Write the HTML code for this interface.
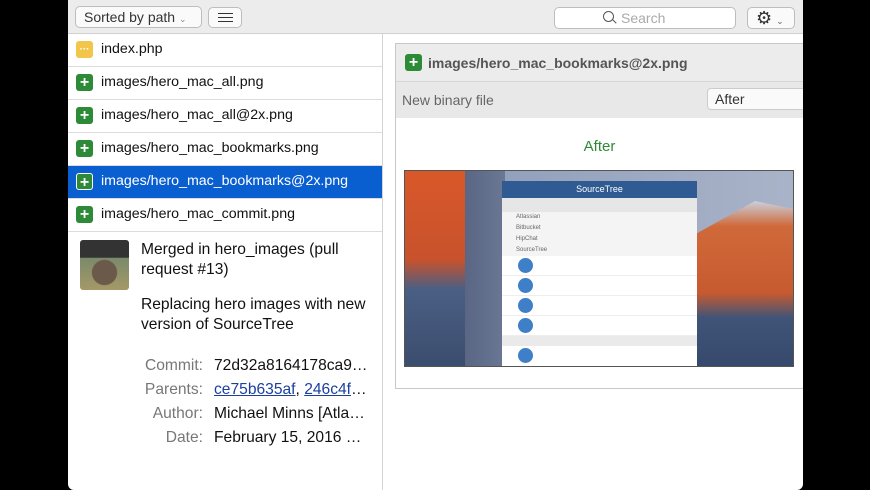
<!DOCTYPE html>
<html><head><style>
*{margin:0;padding:0;box-sizing:border-box}
body{width:870px;height:490px;background:#000;font-family:"Liberation Sans",sans-serif;position:relative;overflow:hidden}
.win{position:absolute;left:68px;top:0;width:735px;height:490px;background:#fff;border-radius:0 0 6px 6px;overflow:hidden}
.tb{position:absolute;left:0;top:0;width:735px;height:34px;background:#ececec;border-bottom:1px solid #d0d0d0}
.btn{position:absolute;background:#fafafa;border:1px solid #bdbdbd;border-radius:5px;font-size:14px;color:#333}
.left{position:absolute;left:0;top:34px;width:315px;height:456px;border-right:1px solid #d4d4d4}
.row{height:33px;border-bottom:1px solid #dcdcdc;font-size:14.2px;color:#111;line-height:30px;padding-left:33px;position:relative}
.ic{position:absolute;left:8px;top:7px;width:17px;height:17px;border-radius:3px;background:#2d8a36;color:#fff;font-weight:bold;font-size:16px;line-height:17px;text-align:center}
.sel{background:#0a5fd0;color:#fff}
.sel .ic{border:1px solid #fff}
.meta{position:absolute;font-size:15.6px;color:#111}
.lab{position:absolute;font-size:15.6px;color:#777;text-align:right;width:70px}
</style></head><body>
<div class="win">
 <div class="tb">
  <div class="btn" style="left:7px;top:6px;width:127px;height:22px;line-height:20px;padding-left:8px">Sorted by path <span style="font-size:9px;color:#888">&#8964;</span></div>
  <div class="btn" style="left:140px;top:7px;width:34px;height:21px"><div style="position:absolute;left:9px;top:5px;width:15px;height:9px;border-top:1.5px solid #333;border-bottom:1.5px solid #333"></div><div style="position:absolute;left:9px;top:9px;width:15px;border-top:1.5px solid #333"></div></div>
  <div class="btn" style="left:486px;top:7px;width:182px;height:22px;background:#fff;color:#aaa;line-height:20px;padding-left:66px"><span style="position:absolute;left:48px;top:3px;width:11px;height:11px;border:1.5px solid #555;border-radius:50%"></span><span style="position:absolute;left:57px;top:13px;width:5px;border-top:1.5px solid #555;transform:rotate(45deg)"></span>Search</div>
  <div class="btn" style="left:679px;top:7px;width:48px;height:22px;line-height:20px;padding-left:8px;font-size:18px">&#9881;<span style="font-size:9px;color:#666;margin-left:4px">&#8964;</span></div>
 </div>
 <div class="left">
  <div class="row"><span class="ic" style="background:#f2c54b;font-size:10px">&middot;&middot;&middot;</span>index.php</div>
  <div class="row"><span class="ic">+</span>images/hero_mac_all.png</div>
  <div class="row"><span class="ic">+</span>images/hero_mac_all@2x.png</div>
  <div class="row"><span class="ic">+</span>images/hero_mac_bookmarks.png</div>
  <div class="row sel"><span class="ic">+</span>images/hero_mac_bookmarks@2x.png</div>
  <div class="row"><span class="ic">+</span>images/hero_mac_commit.png</div>
  <div style="position:absolute;left:12px;top:206px;width:49px;height:50px;border-radius:3px;background:radial-gradient(circle at 50% 65%,#6b5a4a 0 30%,transparent 32%),linear-gradient(#333 0 35%,#7a8a6a 36%,#a59868 100%)"></div>
  <div class="meta" style="left:73px;top:206px;line-height:20px">Merged in hero_images (pull<br>request #13)</div>
  <div class="meta" style="left:73px;top:261px;line-height:20px">Replacing hero images with new<br>version of SourceTree</div>
  <div class="lab" style="left:65px;top:323px">Commit:</div><div class="meta" style="left:146px;top:323px">72d32a8164178ca9…</div>
  <div class="lab" style="left:65px;top:347px">Parents:</div><div class="meta" style="left:146px;top:347px;color:#1a3fa0"><u>ce75b635af</u><span style="color:#111">, </span><u>246c4f</u><span style="color:#111">…</span></div>
  <div class="lab" style="left:65px;top:371px">Author:</div><div class="meta" style="left:146px;top:371px">Michael Minns [Atla…</div>
  <div class="lab" style="left:65px;top:395px">Date:</div><div class="meta" style="left:146px;top:395px">February 15, 2016 …</div>
 </div>
 <div style="position:absolute;left:327px;top:43px;width:420px;height:346px;border:1px solid #c8c8c8;background:#fff">
  <div style="height:38px;background:#ececec;border-bottom:1px solid #d6d6d6;font-size:14px;font-weight:bold;color:#555;line-height:38px;padding-left:32px;position:relative"><span class="ic" style="left:9px;top:10px">+</span>images/hero_mac_bookmarks@2x.png</div>
  <div style="height:36px;background:#e8e8e8;font-size:14px;color:#666;line-height:36px;padding-left:6px;position:relative">New binary file
   <div style="position:absolute;left:311px;top:6px;width:110px;height:22px;background:#fafafa;border:1px solid #ccc;border-radius:4px;line-height:20px;padding-left:7px;color:#333">After</div></div>
  <div style="position:absolute;left:0;top:94px;width:407px;text-align:center;font-size:15px;color:#2d8a36">After</div>
  <div style="position:absolute;left:8px;top:126px;width:390px;height:197px;background:linear-gradient(90deg,#8a9ab8,#a9b3c8);overflow:hidden;border:1px solid #555">
   <div style="position:absolute;left:0;top:0;width:80px;height:197px;background:linear-gradient(180deg,#d9582a 0,#c8522c 45%,#4a5f84 60%,#3b4d6e 100%)"></div>
   <div style="position:absolute;left:60px;top:0;width:40px;height:197px;background:linear-gradient(90deg,#5a6684,#6a7894)"></div>
   <div style="position:absolute;left:290px;top:30px;width:100px;height:167px;background:linear-gradient(180deg,#c9d0dc 0,#d06a3a 15%,#c75a30 55%,#3f5478 70%,#36496c 100%);clip-path:polygon(0 20%,60% 0,100% 5%,100% 100%,0 100%)"></div>
   <div style="position:absolute;left:97px;top:10px;width:195px;height:190px;background:#f4f4f4">
    <div style="height:17px;background:#2f5a92;color:#fff;font-size:9px;text-align:center;line-height:17px">SourceTree</div>
    <div style="height:14px;background:#e6e6e6"></div>
    <div style="font-size:6px;color:#666;line-height:11px;padding-left:14px">Atlassian<br>Bitbucket<br>HipChat<br>SourceTree</div>
    <div style="height:20px;background:#fff;border-bottom:1px solid #eee;position:relative"><span style="position:absolute;left:16px;top:2px;width:15px;height:15px;border-radius:50%;background:#3f7fc8"></span></div>
    <div style="height:20px;background:#fff;border-bottom:1px solid #eee;position:relative"><span style="position:absolute;left:16px;top:2px;width:15px;height:15px;border-radius:50%;background:#3f7fc8"></span></div>
    <div style="height:20px;background:#fff;border-bottom:1px solid #eee;position:relative"><span style="position:absolute;left:16px;top:2px;width:15px;height:15px;border-radius:50%;background:#3f7fc8"></span></div>
    <div style="height:20px;background:#fff;border-bottom:1px solid #eee;position:relative"><span style="position:absolute;left:16px;top:2px;width:15px;height:15px;border-radius:50%;background:#3f7fc8"></span></div>
    <div style="height:10px;background:#eaeaea"></div>
    <div style="height:20px;background:#fff;position:relative"><span style="position:absolute;left:16px;top:2px;width:15px;height:15px;border-radius:50%;background:#3f7fc8"></span></div>
   </div>
  </div>
 </div>
</div>
</body></html>
